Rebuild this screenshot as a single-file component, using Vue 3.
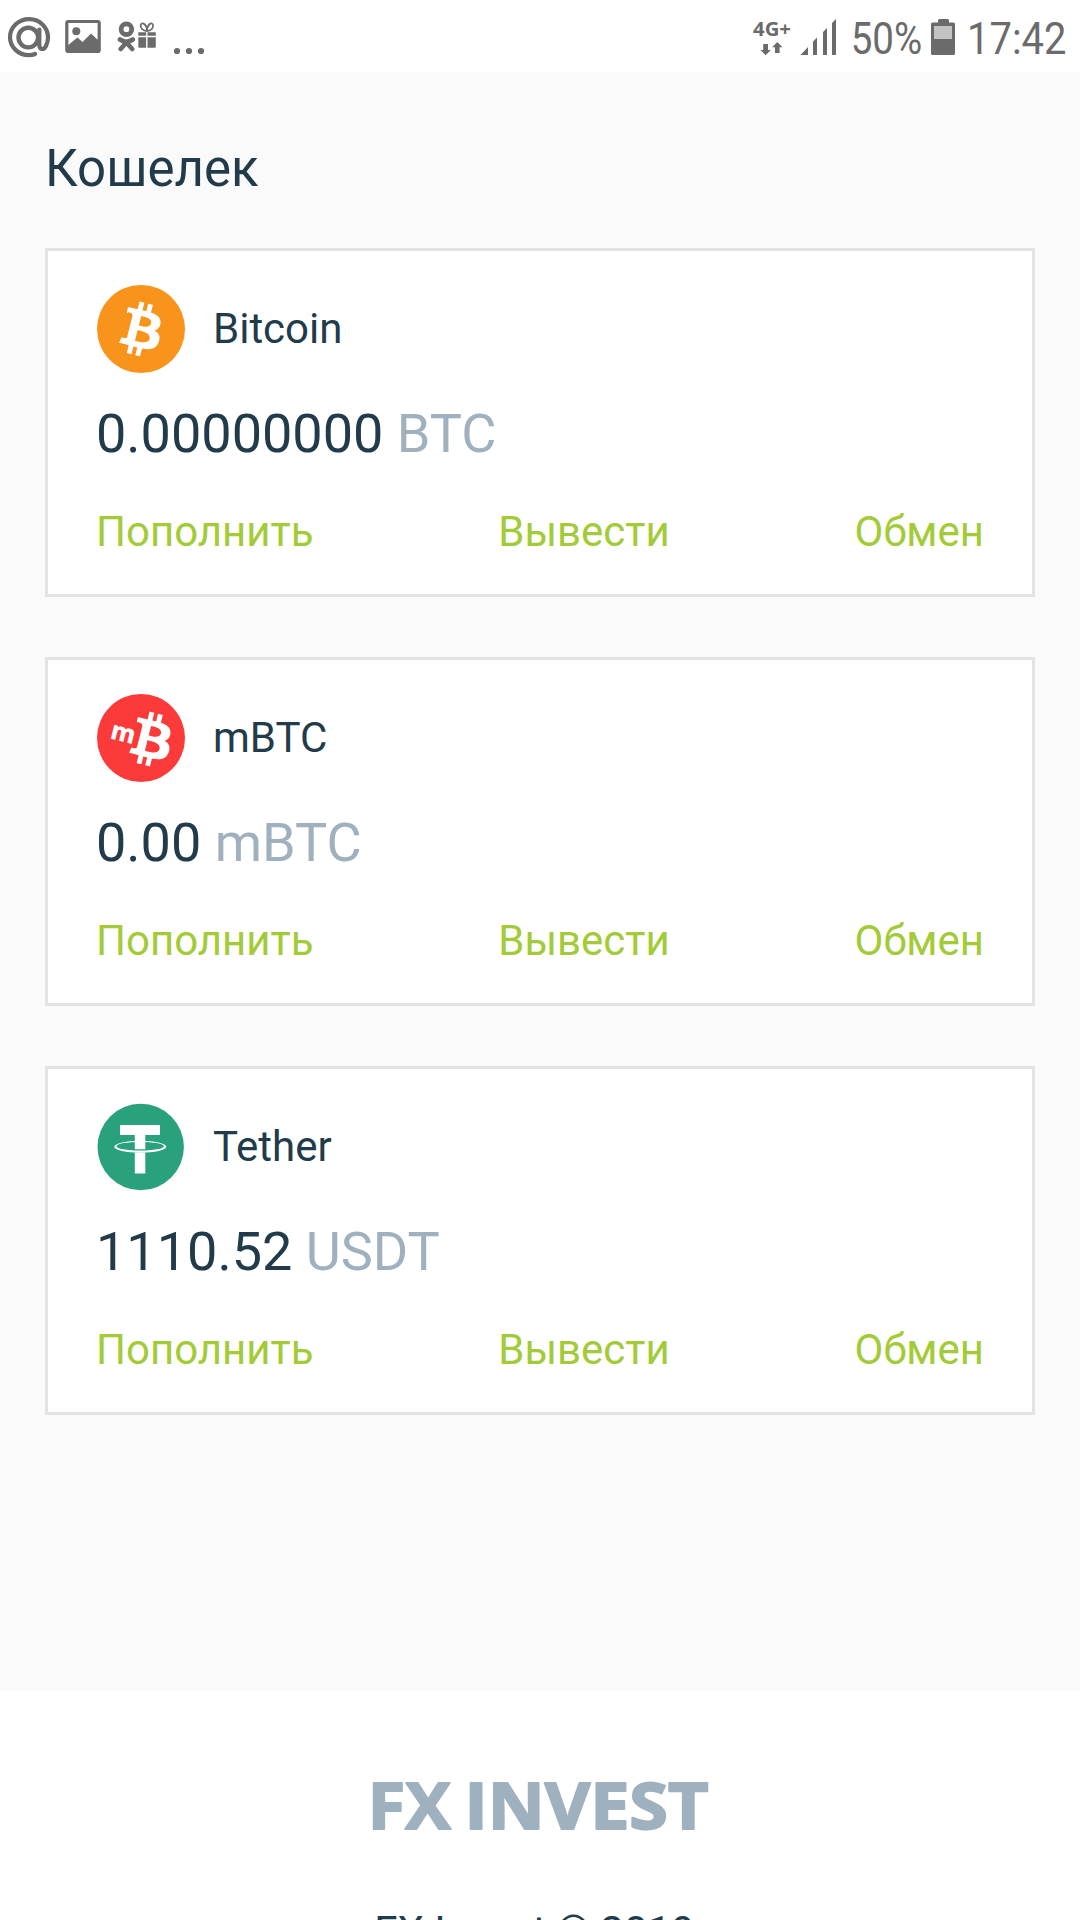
<template>
  <div class="screen">
    <header class="status-bar">
      <div class="status-group">
        <!-- Mail -->
        <svg class="status-icon" width="44" height="72" viewBox="7 0 44 72">
          <g fill="none" stroke="#6b6b6b" stroke-linecap="round">
            <circle cx="28.3" cy="37.6" r="9.8" stroke-width="4.4" />
            <path d="M39.3 29.5V44.5C39.3 50.5 44 50 46 46C47.3 43.3 48 41 48 37.7A19 18 0 1 0 29 55.2Q32.5 55.2 35 54" stroke-width="4.2" />
          </g>
        </svg>
        <!-- Gallery -->
        <svg class="status-icon icon-gallery" width="36" height="72" viewBox="65 0 36 72">
          <rect x="66.8" y="21.5" width="32.4" height="30" rx="1.5" fill="none" stroke="#6b6b6b" stroke-width="3.2" />
          <circle cx="76.3" cy="31.2" r="4" fill="#6b6b6b" />
          <path d="M67 46L77.5 37.5L82.5 42L91 33.5L99 41V52H67Z" fill="#6b6b6b" />
        </svg>
        <!-- Odnoklassniki gift -->
        <svg class="status-icon icon-gift" width="40" height="72" viewBox="117 0 40 72">
          <g fill="none" stroke="#6b6b6b">
            <circle cx="126.4" cy="29.2" r="5.3" stroke-width="4.8" />
            <path d="M120 39.5Q126.4 44 132.8 39.5M126.4 42.5L120.7 49M126.4 42.5L132.2 49" stroke-width="4.6" stroke-linecap="round" />
            <path d="M147 31C143 31 140 28 140.7 25C142 21 147.5 25 147 31C147 25 151.5 21 153 25C153.6 28 151 31 147 31Z" stroke-width="1.8" />
          </g>
          <path d="M138.3 32.3H146.1V35.8H138.3ZM147.5 32.3H155.8V35.8H147.5ZM138.3 37.2H146.1V47.7H139.3Q138.3 47.7 138.3 46.7ZM147.5 37.2H155.8V46.7Q155.8 47.7 154.8 47.7H147.5Z" fill="#6b6b6b" />
        </svg>
        <svg class="status-icon icon-more" width="32" height="72" viewBox="173 0 32 72" fill="#6b6b6b">
          <circle cx="177" cy="51" r="3.1" />
          <circle cx="189" cy="51" r="3.1" />
          <circle cx="201" cy="51" r="3.1" />
        </svg>
      </div>

      <div class="status-group">
        <!-- Network type -->
        <svg class="status-icon" width="40" height="72" viewBox="752 0 40 72" fill="#6b6b6b">
          <text class="network" x="753" y="35.8" textLength="38" lengthAdjust="spacingAndGlyphs">4G+</text>
          <path d="M763.2 44H768V50H770.9L765.6 55.2L760.4 50H763.2Z" />
          <path d="M775 53V47.2H772.1L777.3 42L782.5 47.2H779.6V53Z" />
        </svg>
        <!-- Signal -->
        <svg class="status-icon icon-signal" width="37" height="72" viewBox="800 0 37 72" fill="#6b6b6b">
          <path d="M800.5 55L808 47V55ZM813 55V41.5L817 37.5V55ZM823 55V32L827 28V55ZM832 55V23L836 19V55Z" />
        </svg>
        <svg class="status-icon icon-percent" width="76" height="72" viewBox="848 0 76 72" fill="#6b6b6b">
          <text class="status-text" x="850.7" y="54.2" textLength="71.5" lengthAdjust="spacingAndGlyphs">50%</text>
        </svg>
        <!-- Battery -->
        <svg class="status-icon icon-battery" width="24" height="72" viewBox="931 0 24 72" fill="#6b6b6b">
          <path d="M938 22.5V20.5Q938 19 939.5 19H947.5Q949 19 949 20.5V22.5H953.5Q955 22.5 955 24V53.5Q955 55 953.5 55H932.5Q931 55 931 53.5V24Q931 22.5 932.5 22.5Z" />
          <rect x="934" y="26" width="18" height="13" fill="#c3c3c3" />
        </svg>
        <svg class="status-icon icon-clock" width="108" height="72" viewBox="964 0 108 72" fill="#6b6b6b">
          <text class="status-text" x="967" y="54.2" textLength="99.5" lengthAdjust="spacingAndGlyphs">17:42</text>
        </svg>
      </div>
    </header>

    <main class="content">
      <h1 class="title">Кошелек</h1>

      <section v-for="wallet in wallets" :key="wallet.unit" class="card">
        <div class="card-head">
          <svg v-if="wallet.icon === 'tether'" class="coin" viewBox="0 0 88 88">
            <circle cx="43.7" cy="44" r="43.2" fill="#29a17d" />
            <path d="M23 22H63V32H48.3V46.3H37.8V32H23ZM37.8 49.5H48.3V70.6H37.8Z" fill="#fff" />
            <path
              d="M17.3 43.7A26 6 0 0 1 69.3 43.7A26 6 0 0 1 17.3 43.7ZM19.5 43.2A23.7 4.4 0 0 0 66.9 43.2A23.7 4.4 0 0 0 19.5 43.2Z"
              fill="#fff"
              fill-rule="evenodd"
            />
          </svg>
          <svg v-else class="coin" viewBox="0 0 32 32">
            <circle cx="16" cy="16" r="16" :fill="wallet.color" />
            <path :transform="wallet.shift" :d="coinSign" fill="#fff" />
            <text v-if="wallet.icon === 'mbtc'" class="milli" transform="translate(4.5 16) rotate(14)">m</text>
          </svg>
          <span class="name">{{ wallet.name }}</span>
        </div>
        <div class="amount">
          {{ wallet.amount }} <span class="unit">{{ wallet.unit }}</span>
        </div>
        <nav class="actions">
          <a v-for="action in actions" :key="action" class="action">{{ action }}</a>
        </nav>
      </section>
    </main>

    <footer class="footer">
      <svg class="logo" width="352" height="90" viewBox="364 1760 352 90">
        <text x="367.8" y="1828.6" textLength="83" lengthAdjust="spacingAndGlyphs">FX</text>
        <text x="464.5" y="1828.6" textLength="244" lengthAdjust="spacingAndGlyphs">INVEST</text>
      </svg>
      <div class="copyright">FX Invest © 2019</div>
    </footer>
  </div>
</template>

<script setup>
const actions = ['Пополнить', 'Вывести', 'Обмен'];

const wallets = [
  { icon: 'btc', name: 'Bitcoin', amount: '0.00000000', unit: 'BTC', color: '#f8931c', shift: 'translate(-0.1 0)' },
  { icon: 'mbtc', name: 'mBTC', amount: '0.00', unit: 'mBTC', color: '#fc3a39', shift: 'translate(3.5 0.4)' },
  { icon: 'tether', name: 'Tether', amount: '1110.52', unit: 'USDT' },
];

// Shared by the Bitcoin and mBTC icons
const coinSign =
  'M23.189 14.02c.314-2.096-1.283-3.223-3.465-3.975l.708-2.84-1.728-.43-.69 2.765c-.454-.114-.92-.22-1.385-.326l.695-2.783L15.596 6l-.708 2.839c-.376-.086-.746-.17-1.104-.26l.002-.009-2.384-.595-.46 1.846s1.283.294 1.256.312c.7.175.826.638.805 1.006l-.806 3.235c.048.012.11.03.18.057l-.183-.045-1.13 4.532c-.086.212-.303.531-.793.41.018.025-1.256-.313-1.256-.313l-.858 1.978 2.25.561c.418.105.828.215 1.231.318l-.715 2.872 1.727.43.708-2.84c.472.127.93.245 1.378.357l-.706 2.828 1.728.43.715-2.866c2.948.558 5.164.333 6.097-2.333.752-2.146-.037-3.385-1.588-4.192 1.13-.26 1.98-1.003 2.207-2.538zm-3.95 5.538c-.533 2.147-4.148.986-5.32.695l.95-3.805c1.172.293 4.929.872 4.37 3.11zm.535-5.569c-.487 1.953-3.495.96-4.47.717l.86-3.45c.975.243 4.118.696 3.61 2.733z';
</script>

<style>
body {
  margin: 0;
  background: #fff;
}
</style>

<style scoped>
.screen {
  display: flex;
  flex-direction: column;
  width: 1080px;
  height: 1920px;
  overflow: hidden;
  background: #fafafa;
  color: #223b4a;
  font-family: Roboto, sans-serif;
}

.status-bar {
  display: flex;
  flex: none;
  justify-content: space-between;
  box-sizing: border-box;
  height: 72px;
  padding: 0 8px 0 7px;
  background: #fff;
}

.status-group {
  display: flex;
}

.status-icon {
  display: block;
}

.icon-gallery {
  margin-left: 14px;
}

.icon-gift,
.icon-more {
  margin-left: 16px;
}

.icon-signal {
  margin-left: 8px;
}

.icon-percent {
  margin-left: 11px;
}

.icon-battery {
  margin-left: 7px;
}

.icon-clock {
  margin-left: 9px;
}

.network {
  font: 700 19.5px 'Open Sans', sans-serif;
}

.status-text {
  font: 400 45px Roboto, sans-serif;
}

.content {
  display: flex;
  flex: none;
  flex-direction: column;
  gap: 60px;
  box-sizing: border-box;
  height: 1619px;
  padding: 67px 45px 0;
}

.title {
  margin: 0 0 -11px;
  font-size: 51px;
  font-weight: 400;
  line-height: 60px;
}

.card {
  display: flex;
  flex: none;
  flex-direction: column;
  box-sizing: border-box;
  height: 349px;
  padding: 34px 48px 0;
  border: 3px solid #e3e3e3;
  background: #fff;
}

.card-head {
  display: flex;
  align-items: center;
  gap: 28px;
  height: 88px;
  margin-left: 1px;
}

.coin {
  width: 88px;
  height: 88px;
}

.milli {
  fill: #fff;
  stroke: #fff;
  stroke-width: 0.2;
  font: 700 9px 'Open Sans', sans-serif;
}

.name {
  font-size: 42px;
  line-height: 50px;
}

.amount {
  margin-top: 29px;
  font-size: 54px;
  line-height: 64px;
}

.unit {
  color: #9fb1be;
}

.actions {
  display: flex;
  justify-content: space-between;
  margin-top: 41px;
}

.action {
  color: #a2cb37;
  font-size: 42px;
  line-height: 50px;
}

.footer {
  display: flex;
  flex: none;
  flex-direction: column;
  align-items: center;
  height: 300px;
  padding-top: 69px;
  background: #fff;
}

.logo {
  display: block;
  fill: #9fb1be;
  stroke: #9fb1be;
  stroke-linejoin: round;
  stroke-width: 2;
  font: 700 64px 'Open Sans', sans-serif;
}

.copyright {
  margin: 57px 11px 0 0;
  font-size: 42px;
  line-height: 50px;
}
</style>
